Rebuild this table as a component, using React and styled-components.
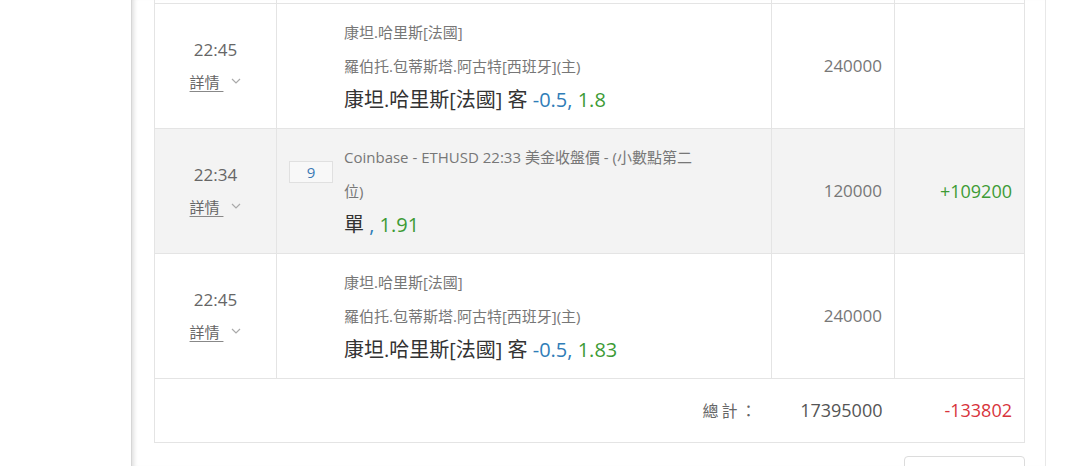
import styled, { createGlobalStyle } from 'styled-components';

const GlobalStyle = createGlobalStyle`
  html, body {
    margin: 0;
    padding: 0;
    background: #fff;
  }
  body {
    font-family: "Open Sans", "Noto Sans CJK TC", sans-serif;
    color: #555;
  }
`;

const Page = styled.div`
  width: 1080px;
  height: 466px;
  overflow: hidden;
  display: flex;
`;

const Gutter = styled.div`
  width: 131px;
  flex: none;
`;

const Panel = styled.div`
  width: 915px;
  flex: none;
  border-left: 1px solid #d6d6d6;
  border-right: 1px solid #e8e8e8;
  box-shadow: inset 5px 0 4px -3px rgba(0, 0, 0, 0.13);
  padding: 0 20px 0 22px;
  box-sizing: border-box;
`;

const Table = styled.table`
  width: 870px;
  border-collapse: collapse;
  table-layout: fixed;
  border: 1px solid #e4e4e4;
  border-top: none;
`;

const Row = styled.tr`
  background: ${(p) => (p.shaded ? '#f3f3f3' : '#fff')};
`;

const Cell = styled.td`
  border: 1px solid #e4e4e4;
  border-top: none;
  height: ${(p) => p.h || 125}px;
  padding: 0;
  vertical-align: middle;
  text-align: ${(p) => p.align || 'left'};
  padding-right: ${(p) => (p.align === 'right' ? '12px' : '0')};
  box-sizing: border-box;
`;

const TimeBox = styled.div`
  display: flex;
  flex-direction: column;
  align-items: center;
  line-height: 32px;
`;

const Time = styled.span`
  font-size: 17px;
  color: #666;
`;

const Detail = styled.span`
  font-size: 15px;
  color: #666;
  display: inline-flex;
  align-items: center;
  gap: 8px;
  cursor: pointer;
`;

const DetailText = styled.span`
  text-decoration: underline;
  text-decoration-color: #888;
  text-underline-offset: 3px;
  white-space: pre;
`;

const Content = styled.div`
  display: flex;
  align-items: flex-start;
`;

const BadgeSlot = styled.div`
  width: 67px;
  flex: none;
  display: flex;
  padding-left: 12px;
  padding-top: 21px;
  box-sizing: border-box;
`;

const Badge = styled.span`
  width: 44px;
  height: 22px;
  box-sizing: border-box;
  border: 1px solid #e0e0e0;
  background: #f8f8f8;
  color: #3b7ab5;
  font-size: 15px;
  line-height: 20px;
  text-align: center;
`;

const Lines = styled.div`
  width: 360px;
  line-height: 34px;
`;

const Small = styled.div`
  font-size: 15px;
  color: #777;
`;

const Big = styled.div`
  font-size: 20px;
  color: #333;
  white-space: nowrap;
`;

const Num = styled.span`
  color: ${(p) => p.color};
`;

const Amount = styled.span`
  font-size: ${(p) => p.size || 17}px;
  color: ${(p) => p.color || '#777'};
`;

const TotalLabel = styled.span`
  font-size: 16px;
  color: #666;
  letter-spacing: 3px;
`;

const Footer = styled.div`
  display: flex;
  justify-content: flex-end;
  padding-top: 13px;
`;

const Button = styled.button`
  width: 121px;
  height: 36px;
  border: 1px solid #dcdcdc;
  border-radius: 4px;
  background: #fff;
`;

const Chevron = () => (
  <svg width="10" height="7" viewBox="0 0 10 7">
    <polyline points="1,1 5,5 9,1" fill="none" stroke="#aaa" strokeWidth="1.2" />
  </svg>
);

const BLUE = '#2f7db8';
const GREEN = '#3d9b35';
const RED = '#d8343c';

const rows = [
  {
    time: '22:45',
    lines: ['康坦.哈里斯[法國]', '羅伯托.包蒂斯塔.阿古特[西班牙](主)'],
    pick: '康坦.哈里斯[法國] 客 ',
    hcap: '-0.5',
    odds: '1.8',
    amount: '240000',
    result: '',
  },
  {
    time: '22:34',
    badge: '9',
    lines: ['Coinbase - ETHUSD 22:33 美金收盤價 - (小數點第二位)'],
    pick: '單',
    hcap: '',
    odds: '1.91',
    amount: '120000',
    result: '+109200',
    shaded: true,
  },
  {
    time: '22:45',
    lines: ['康坦.哈里斯[法國]', '羅伯托.包蒂斯塔.阿古特[西班牙](主)'],
    pick: '康坦.哈里斯[法國] 客 ',
    hcap: '-0.5',
    odds: '1.83',
    amount: '240000',
    result: '',
  },
];

export default function App() {
  return (
    <Page>
      <GlobalStyle />
      <Gutter />
      <Panel>
        <Table>
          <colgroup>
            <col style={{ width: 122 }} />
            <col style={{ width: 495 }} />
            <col style={{ width: 123 }} />
            <col style={{ width: 130 }} />
          </colgroup>
          <tbody>
            <tr>
              <Cell h={3} />
              <Cell h={3} />
              <Cell h={3} />
              <Cell h={3} />
            </tr>
            {rows.map((r, i) => (
              <Row key={i} shaded={r.shaded}>
                <Cell>
                  <TimeBox>
                    <Time>{r.time}</Time>
                    <Detail>
                      <DetailText>詳情 </DetailText>
                      <Chevron />
                    </Detail>
                  </TimeBox>
                </Cell>
                <Cell>
                  <Content>
                    <BadgeSlot>{r.badge && <Badge>{r.badge}</Badge>}</BadgeSlot>
                    <Lines>
                      {r.lines.map((l, j) => (
                        <Small key={j}>{l}</Small>
                      ))}
                      <Big>
                        {r.pick}
                        {r.hcap ? (
                          <Num color={BLUE}>{r.hcap},</Num>
                        ) : (
                          <Num color={BLUE}> ,</Num>
                        )}{' '}
                        <Num color={GREEN}>{r.odds}</Num>
                      </Big>
                    </Lines>
                  </Content>
                </Cell>
                <Cell align="right">
                  <Amount>{r.amount}</Amount>
                </Cell>
                <Cell align="right">
                  <Amount size={18} color={GREEN}>{r.result}</Amount>
                </Cell>
              </Row>
            ))}
            <tr>
              <Cell h={64} colSpan={2} align="right" style={{ borderRight: 'none' }}>
                <TotalLabel>總計：</TotalLabel>
              </Cell>
              <Cell h={64} align="right" style={{ borderLeft: 'none', borderRight: 'none' }}>
                <Amount size={18} color="#555">17395000</Amount>
              </Cell>
              <Cell h={64} align="right" style={{ borderLeft: 'none' }}>
                <Amount size={18} color={RED}>-133802</Amount>
              </Cell>
            </tr>
          </tbody>
        </Table>
        <Footer>
          <Button />
        </Footer>
      </Panel>
    </Page>
  );
}
